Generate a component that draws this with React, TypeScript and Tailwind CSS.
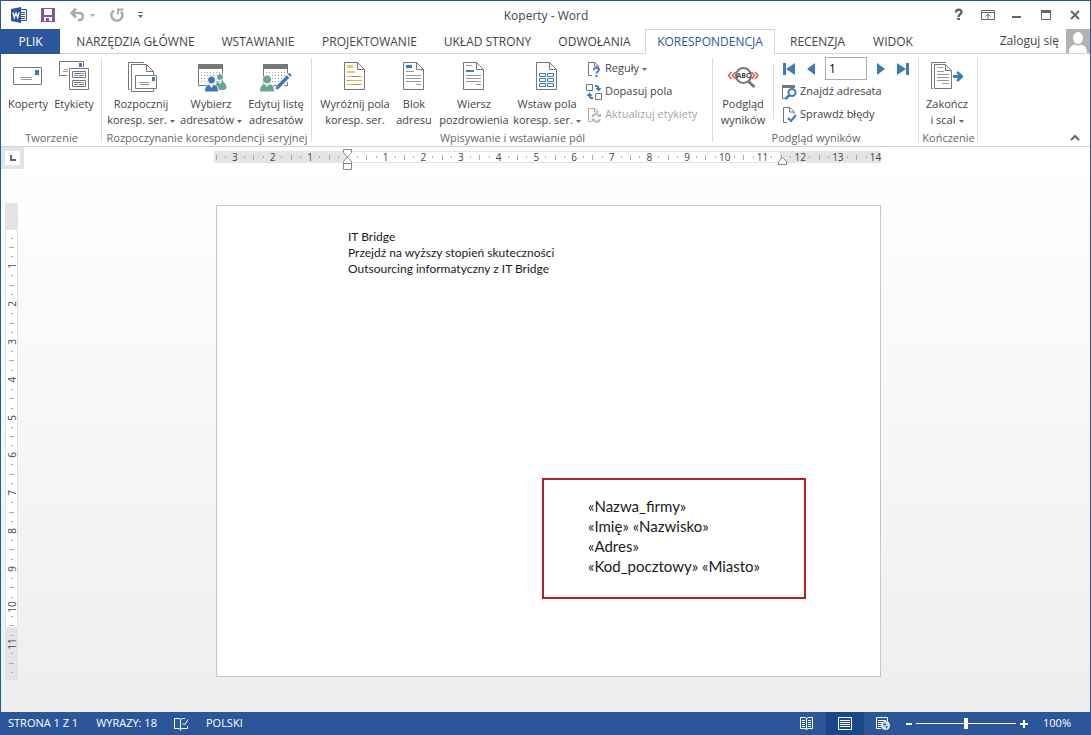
import { useState } from "react";
import type { ReactNode } from "react";
import clsx from "clsx";

const tabs = [
    { label: "NARZĘDZIA GŁÓWNE", width: "w-[145px]" },
    { label: "WSTAWIANIE", width: "w-[100px]" },
    { label: "PROJEKTOWANIE", width: "w-[123px]" },
    { label: "UKŁAD STRONY", width: "w-[113px]" },
    { label: "ODWOŁANIA", width: "w-[101px]" },
    { label: "KORESPONDENCJA", width: "w-[130px]" },
    { label: "RECENZJA", width: "w-[85px]" },
    { label: "WIDOK", width: "w-[66px]" },
];

function Icon({ children }: { children: ReactNode }) {
    return (
        <svg width="32" height="32" viewBox="0 0 32 32" fill="none" className="shrink-0" aria-hidden="true">
            {children}
        </svg>
    );
}

function SmallIcon({ children }: { children: ReactNode }) {
    return (
        <svg width="16" height="16" viewBox="0 0 16 16" fill="none" className="shrink-0" aria-hidden="true">
            {children}
        </svg>
    );
}

function Caret() {
    return (
        <svg width="5" height="3" viewBox="0 0 5 3" className="ml-[3px] inline-block align-middle" aria-hidden="true">
            <path d="M0 0h5L2.5 3z" fill="#666" />
        </svg>
    );
}

function PageOutline() {
    return (
        <>
            <path d="M5.5 2.5h13l7 7v20h-20z" fill="#fff" stroke="#777" />
            <path d="M18.5 2.5v7h7" stroke="#777" />
        </>
    );
}

function Calendar() {
    return (
        <>
            <path d="M3.5 4.5h24v21h-24z" fill="#fff" stroke="#777" />
            <path d="M3 4h25v5H3z" fill="#777" />
            <path
                d="M6 12.5h20M6 15.5h20M6 18.5h20M6 21.5h20"
                stroke="#9a9a9a"
                strokeDasharray="1 2"
            />
        </>
    );
}

function EnvelopeIcon() {
    return (
        <Icon>
            <path d="M1.5 7.5h28v17h-28z" fill="#fff" stroke="#777" />
            <path d="M23 10h4v5h-4z" fill="#3f7ab8" />
            <path d="M8 17.5h12M9 19.5h11" stroke="#999" />
        </Icon>
    );
}

function LabelsIcon() {
    return (
        <Icon>
            <path d="M9 15.5H1.5v-14h24V7" stroke="#777" />
            <path d="M21 3h3v4h-3z" fill="#3f7ab8" />
            <path d="M6 9.5h4M5 11.5h5" stroke="#999" />
            <path d="M11.5 8.5h19v21h-19z" fill="#fff" stroke="#777" />
            <path d="M14.5 11.5h13v6h-13zM14.5 20.5h13v6h-13z" stroke="#777" />
            <path d="M16 13.5h7M16 22.5h7" stroke="#3f7ab8" />
            <path d="M24 13.5h2M16 15.5h4M21 15.5h5M24 22.5h2M16 24.5h4M21 24.5h5" stroke="#888" />
        </Icon>
    );
}

function StartMergeIcon() {
    return (
        <Icon>
            <path d="M19 2.5H3.5v27H5" stroke="#777" />
            <path d="M6.5 4.5h15l7 7v20h-22z" fill="#fff" stroke="#777" />
            <path d="M21.5 4.5v7h7" stroke="#777" />
            <path d="M10.5 15.5h21v13h-21z" fill="#fff" stroke="#777" />
            <path d="M27 17h3v4h-3z" fill="#3f7ab8" />
            <path d="M14 22.5h10M15 24.5h9" stroke="#999" />
        </Icon>
    );
}

function SelectRecipientsIcon() {
    return (
        <Icon>
            <Calendar />
            <circle cx="25" cy="17" r="3.5" fill="#69a597" stroke="#fff" />
            <path d="M20 30c0-6 2-9 5-9s6.5 2 6.5 7l-2 2z" fill="#69a597" />
            <path d="M23 21.5l2 2.5 2-2.5z" fill="#fff" />
            <circle cx="16.5" cy="20" r="4" fill="#3f76b5" stroke="#fff" />
            <path d="M9.5 32c0-5 2-7.500 5-7.500h4c3 0 5 2.500 5 7.500z" fill="#3f76b5" stroke="#fff" />
            <path d="M14.5 25l2 3 2-3z" fill="#fff" />
        </Icon>
    );
}

function EditRecipientsIcon() {
    return (
        <Icon>
            <Calendar />
            <circle cx="7" cy="19.5" r="4.5" fill="#69a597" stroke="#fff" />
            <path d="M-.5 32c0-5 2-8 5-8h5c3 0 5 3 5 8z" fill="#69a597" stroke="#fff" />
            <path d="M5 24.5l2 2.5 2-2.5z" fill="#fff" />
            <path d="M18 27.5L31 14" stroke="#fff" strokeWidth="6" />
            <path d="M18 27l10-10.5" stroke="#3f76b5" strokeWidth="3.5" />
            <path d="M29 15.5l1.5-1.5" stroke="#3f76b5" strokeWidth="3.5" />
            <path d="M15.5 29.5l1-4 3 3z" fill="#3f76b5" />
        </Icon>
    );
}

function HighlightIcon() {
    return (
        <Icon>
            <PageOutline />
            <path d="M8 5h6v3H8zM8 11h8v2H8z" fill="#f0c46c" />
            <path d="M8 16.5h15M8 20.5h15M8 24.5h15" stroke="#e6b04d" />
            <path d="M13 16.5h6M8 20.5h2M16 24.5h4" stroke="#888" />
        </Icon>
    );
}

function AddressBlockIcon() {
    return (
        <Icon>
            <PageOutline />
            <path d="M8 5h6v3H8z" fill="#3f7ab8" />
            <path d="M8 11.5h8M8 15.5h15M8 18.5h15M8 21.5h15M18 24.5h5" stroke="#999" />
        </Icon>
    );
}

function GreetingIcon() {
    return (
        <Icon>
            <PageOutline />
            <path d="M8 10h8v2H8z" fill="#3f7ab8" />
            <path d="M8 5.5h6M8 15.5h15M8 18.5h15M8 21.5h15M18 24.5h5" stroke="#999" />
        </Icon>
    );
}

function InsertFieldIcon() {
    return (
        <Icon>
            <PageOutline />
            <path
                d="M8.5 13.5h6v3h-6zM16.5 13.5h6v3h-6zM8.5 18.5h6v3h-6zM16.5 18.5h6v3h-6zM8.5 23.5h6v3h-6zM16.5 23.5h6v3h-6z"
                stroke="#3f7ab8"
            />
        </Icon>
    );
}

function PreviewIcon() {
    return (
        <Icon>
            <path
                d="M4.5 12l-3 3.5 3 3.5M8.5 12l-3 3.5 3 3.5M24.5 12l3 3.5-3 3.5M28 12l3 3.5-3 3.5"
                stroke="#dd5c3e"
                strokeWidth="1.5"
            />
            <path d="M21.5 21.5l6 5.5" stroke="#777" strokeWidth="3" />
            <circle cx="16.5" cy="15.5" r="7.5" fill="#fff" stroke="#777" strokeWidth="2" />
            <text x="16.5" y="18" textAnchor="middle" fontSize="7" fontWeight="700" fill="#444">
                ABC
            </text>
        </Icon>
    );
}

function FinishIcon() {
    return (
        <Icon>
            <path d="M15 2.5H.5v26H2" stroke="#777" />
            <path d="M3.5 4.5h11l6 6v18h-17z" fill="#fff" stroke="#777" />
            <path d="M14.5 4.5v6h6" stroke="#777" />
            <path d="M6 7.5h6M6 11.5h7M6 14.5h12M6 17.5h12M6 20.5h12M11 23.5h7" stroke="#999" />
            <path d="M22 16.5h8" stroke="#3f7ab8" strokeWidth="3" />
            <path d="M26 12l5 4.5-5 4.5" stroke="#3f7ab8" strokeWidth="2.5" />
        </Icon>
    );
}

function RulesIcon() {
    return (
        <SmallIcon>
            <path d="M6 14.5H2.5v-13H9L12.5 5v1M8.5 1.5V5h4" stroke="#777" />
            <path d="M8 9c0-3 5-3 5-.5 0 2-2.5 1.5-2.5 4" stroke="#3f7ab8" strokeWidth="2" />
            <path d="M9.5 14h2v2h-2z" fill="#3f7ab8" />
        </SmallIcon>
    );
}

function MatchFieldsIcon() {
    return (
        <SmallIcon>
            <path d="M.5.5h6v6h-6zM9.5 9.5h6v6h-6z" stroke="#777" />
            <path d="M9 2c2.500-.5 3.500 1 3.500 3" stroke="#3f7ab8" strokeWidth="2" />
            <path d="M9.500 4h6l-3 3.500z" fill="#3f7ab8" />
            <path d="M7 14c-2.500.5-3.500-1-3.500-3" stroke="#3f7ab8" strokeWidth="2" />
            <path d="M.5 12h6l-3-3.500z" fill="#3f7ab8" />
        </SmallIcon>
    );
}

function RefreshLabelsIcon() {
    return (
        <SmallIcon>
            <path d="M5 14.5H2.5v-13H9L12.5 5M8.5 1.5V5h4" stroke="#aaa" />
            <path d="M6.5 10c1-3.5 5-3.5 7-1M14 12c-1 3.5-5 3.5-7 1" stroke="#b5b5b5" strokeWidth="2" />
            <path d="M15 6v4h-4zM5.5 15.5v-4h4z" fill="#b5b5b5" />
        </SmallIcon>
    );
}

function FindRecipientIcon() {
    return (
        <SmallIcon>
            <path d="M5 14.5H1.5V3.5M13.5 4V2" stroke="#777" />
            <path d="M1 1h13v3H1z" fill="#777" />
            <circle cx="11" cy="8.5" r="3.5" fill="#fff" stroke="#3f7ab8" strokeWidth="2" />
            <path d="M8.5 11l-4 4" stroke="#3f7ab8" strokeWidth="2.5" />
        </SmallIcon>
    );
}

function CheckErrorsIcon() {
    return (
        <SmallIcon>
            <path d="M6 15.5H2.5V.5H9l4 4V7M8.5.5V5H13" stroke="#777" />
            <path d="M7 11l3 3 5-6" stroke="#3f7ab8" strokeWidth="2" />
        </SmallIcon>
    );
}

function BigButton({
    icon,
    lines,
    width,
    menu,
}: {
    icon: ReactNode;
    lines: string[];
    width: string;
    menu?: boolean;
}) {
    return (
        <button className={clsx("flex flex-col items-center gap-1 leading-4 whitespace-nowrap hover:bg-[#d5e1f2]", width)}>
            {icon}
            <span className="text-center">
                {lines.map((line, i) => (
                    <span key={line} className="block">
                        {line}
                        {menu && i === lines.length - 1 && <Caret />}
                    </span>
                ))}
            </span>
        </button>
    );
}

function SmallButton({ icon, label, menu, disabled }: { icon: ReactNode; label: string; menu?: boolean; disabled?: boolean }) {
    return (
        <button disabled={disabled} className="flex h-[23px] items-center gap-[3px] whitespace-nowrap disabled:text-[#a6a6a6]">
            {icon}
            <span>
                {label}
                {menu && <Caret />}
            </span>
        </button>
    );
}

function Group({ label, width, children }: { label: string; width: string; children: ReactNode }) {
    return (
        <section
            aria-label={label}
            className={clsx("relative flex shrink-0 flex-col justify-between", width)}
        >
            <div className="flex grow">{children}</div>
            <h2 className="text-center leading-4 whitespace-nowrap text-[#666]">{label}</h2>
            <div className="absolute top-1 right-0 bottom-1 w-px bg-[#dcdcdc]" />
        </section>
    );
}

function Arrow({ label, children }: { label: string; children: ReactNode }) {
    return (
        <button aria-label={label} className="flex h-[23px] items-center">
            <svg width="14" height="12" viewBox="0 0 14 12" fill="#3f7ab8">
                {children}
            </svg>
        </button>
    );
}

function TitleBar() {
    return (
        <header className="grid h-7 shrink-0 grid-cols-[1fr_auto_1fr] items-center">
            <div className="flex items-center pl-[10px]">
                <svg width="16" height="16" viewBox="0 0 16 16" aria-hidden="true">
                    <path d="M8.5 2.5h7v11h-7z" fill="#fff" stroke="#2b579a" />
                    <path d="M10 5.5h4M10 7.5h4M10 9.5h4M10 11.5h4" stroke="#2b579a" />
                    <path d="M0 2l10-2v16L0 14z" fill="#2b579a" />
                    <path d="M2 5.5l1.3 5L5 6l1.7 4.5L8 5.5" fill="none" stroke="#fff" strokeWidth="1.3" />
                </svg>
                <button aria-label="Zapisz" className="ml-[14px]">
                    <svg width="14" height="14" viewBox="0 0 14 14">
                        <path d="M0 0h14v14H0z" fill="#8454a8" />
                        <path d="M3 1h8v6H3zM3 9h8v4H3z" fill="#fff" />
                        <path d="M5 10h3v3H5z" fill="#8454a8" />
                    </svg>
                </button>
                <button aria-label="Cofnij" className="ml-[15px] flex items-center gap-[6px]">
                    <svg width="14" height="14" viewBox="0 0 14 14" fill="none">
                        <path d="M2 5h7c5.5 0 5 7 .5 7H8" stroke="#aaa" strokeWidth="2.5" />
                        <path d="M6 .5L1.5 5 6 9.500" stroke="#aaa" strokeWidth="2.5" />
                    </svg>
                    <svg width="5" height="3" viewBox="0 0 5 3">
                        <path d="M0 0h5L2.5 3z" fill="#aaa" />
                    </svg>
                </button>
                <button aria-label="Powtórz" className="ml-[15px]">
                    <svg width="14" height="14" viewBox="0 0 14 14" fill="none">
                        <path d="M4 2.5A5.500 5.500 0 1 0 11 3.500" stroke="#aaa" strokeWidth="2.5" />
                        <path d="M8 6.500V1.500h5.500" stroke="#aaa" strokeWidth="2" />
                    </svg>
                </button>
                <button aria-label="Dostosuj pasek" className="ml-[14px]">
                    <svg width="5" height="7" viewBox="0 0 5 7">
                        <path d="M0 0h5v1H0zM0 3h5L2.5 6z" fill="#666" />
                    </svg>
                </button>
            </div>
            <h1 className="pt-[2px] pl-px">Koperty - Word</h1>
            <div className="flex items-center justify-end gap-[15px] pr-2">
                <button aria-label="Pomoc">
                    <svg width="14" height="14" viewBox="0 0 14 14" fill="none">
                        <path d="M4 4.5c0-3.5 5.500-3.5 5.500-.5 0 2.500-3 2-3 5" stroke="#666" strokeWidth="2.5" />
                        <path d="M5 10h3v2H5z" fill="#666" />
                    </svg>
                </button>
                <button aria-label="Opcje wyświetlania Wstążki">
                    <svg width="14" height="14" viewBox="0 0 14 14" fill="none">
                        <path d="M.5 2.5h13v9H.5zM.5 4.5h13M7 6v5M4.500 8.500L7 6l2.500 2.500" stroke="#666" />
                    </svg>
                </button>
                <button aria-label="Minimalizuj">
                    <svg width="14" height="14" viewBox="0 0 14 14">
                        <path d="M2 8h9v2H2z" fill="#666" />
                    </svg>
                </button>
                <button aria-label="Maksymalizuj">
                    <svg width="14" height="14" viewBox="0 0 14 14" fill="none">
                        <path d="M2.500 2.500h9v9h-9z" stroke="#666" />
                        <path d="M2 2h10v3H2z" fill="#666" />
                    </svg>
                </button>
                <button aria-label="Zamknij">
                    <svg width="14" height="14" viewBox="0 0 14 14">
                        <path d="M3 3l8 8M11 3l-8 8" stroke="#666" strokeWidth="2" />
                    </svg>
                </button>
            </div>
        </header>
    );
}

function TabBar() {
    const [active, setActive] = useState("KORESPONDENCJA");

    return (
        <nav className="flex h-[25px] shrink-0 border-b border-[#d4d4d4]">
            <button className="mr-[3px] h-[25px] w-[59px] bg-[#2b579a] text-white">PLIK</button>
            {tabs.map(({ label, width }) => (
                <button
                    key={label}
                    onClick={() => setActive(label)}
                    className={clsx(
                        "h-[25px] shrink-0 whitespace-nowrap",
                        width,
                        active === label && "border-x border-t border-[#d4d4d4] bg-white text-[#2b579a]",
                    )}
                >
                    {label}
                </button>
            ))}
            <button className="ml-auto flex items-center gap-[7px] whitespace-nowrap">
                Zaloguj się
                <svg width="24" height="24" viewBox="0 0 24 24" aria-hidden="true">
                    <path d="M0 0h24v24H0z" fill="#b1b1b1" />
                    <ellipse cx="12" cy="9" rx="5" ry="6" fill="#fff" />
                    <path d="M3 24c0-6 3-8 6-8.5 2 1.5 4 1.5 6 0 3 .5 6 2.500 6 8.500z" fill="#fff" />
                </svg>
            </button>
        </nav>
    );
}

function Ribbon() {
    const [record, setRecord] = useState("1");

    return (
        <div className="flex h-[93px] shrink-0 border-b border-[#d4d4d4] text-[11px]">
            <Group label="Tworzenie" width="w-[101px]">
                <div className="flex pt-[6px] pl-1">
                    <BigButton icon={<EnvelopeIcon />} lines={["Koperty"]} width="w-[46px]" />
                    <BigButton icon={<LabelsIcon />} lines={["Etykiety"]} width="w-[46px]" />
                </div>
            </Group>

            <Group label="Rozpoczynanie korespondencji seryjnej" width="w-[210px]">
                <div className="flex pt-[6px] pl-[2px]">
                    <BigButton icon={<StartMergeIcon />} lines={["Rozpocznij", "koresp. ser."]} width="w-[74px]" menu />
                    <BigButton icon={<SelectRecipientsIcon />} lines={["Wybierz", "adresatów"]} width="w-[66px]" menu />
                    <BigButton icon={<EditRecipientsIcon />} lines={["Edytuj listę", "adresatów"]} width="w-[64px]" />
                </div>
            </Group>

            <Group label="Wpisywanie i wstawianie pól" width="w-[401px]">
                <div className="flex pt-[6px] pl-1">
                    <BigButton icon={<HighlightIcon />} lines={["Wyróżnij pola", "koresp. ser."]} width="w-[78px]" />
                    <BigButton icon={<AddressBlockIcon />} lines={["Blok", "adresu"]} width="w-[40px]" />
                    <BigButton icon={<GreetingIcon />} lines={["Wiersz", "pozdrowienia"]} width="w-[80px]" />
                    <BigButton icon={<InsertFieldIcon />} lines={["Wstaw pola", "koresp. ser."]} width="w-[66px]" menu />
                </div>
                <div className="flex flex-col pt-[3px] pl-[6px]">
                    <SmallButton icon={<RulesIcon />} label="Reguły" menu />
                    <SmallButton icon={<MatchFieldsIcon />} label="Dopasuj pola" />
                    <SmallButton icon={<RefreshLabelsIcon />} label="Aktualizuj etykiety" disabled />
                </div>
            </Group>

            <Group label="Podgląd wyników" width="w-[206px]">
                <div className="flex pt-[6px]">
                    <BigButton icon={<PreviewIcon />} lines={["Podgląd", "wyników"]} width="w-[60px]" />
                </div>
                <div className="mt-[10px] h-[55px] w-px bg-[#dcdcdc]" />
                <div className="flex flex-col pt-[3px] pl-[7px]">
                    <div className="flex items-center gap-2">
                        <Arrow label="Pierwszy rekord">
                            <path d="M2 0h3v12H2zM14 0v12L5 6z" />
                        </Arrow>
                        <Arrow label="Poprzedni rekord">
                            <path d="M12 0v12L4 6z" />
                        </Arrow>
                        <input
                            type="text"
                            aria-label="Rekord"
                            value={record}
                            onChange={(e) => setRecord(e.target.value)}
                            className="h-[23px] w-[42px] border border-[#ababab] bg-white px-[3px] text-[12px] text-black focus:outline-none"
                        />
                        <Arrow label="Następny rekord">
                            <path d="M2 0v12l8-6z" />
                        </Arrow>
                        <Arrow label="Ostatni rekord">
                            <path d="M0 0v12l9-6zM9 0h3v12H9z" />
                        </Arrow>
                    </div>
                    <SmallButton icon={<FindRecipientIcon />} label="Znajdź adresata" />
                    <SmallButton icon={<CheckErrorsIcon />} label="Sprawdź błędy" />
                </div>
            </Group>

            <Group label="Kończenie" width="w-[59px]">
                <div className="flex pt-[6px]">
                    <BigButton icon={<FinishIcon />} lines={["Zakończ", "i scal"]} width="w-[56px]" menu />
                </div>
            </Group>

            <button aria-label="Zwiń Wstążkę" className="mr-[10px] mb-1 ml-auto self-end">
                <svg width="10" height="8" viewBox="0 0 10 8" fill="none">
                    <path d="M1 6l4-4 4 4" stroke="#666" strokeWidth="2" />
                </svg>
            </button>
        </div>
    );
}

// one mark for every quarter of a centimetre
function Marks({ from, count, vertical }: { from: number; count: number; vertical?: boolean }) {
    return (
        <>
            {Array.from({ length: count }, (_, i) => {
                const quarter = from + i;
                const value = Math.abs(quarter / 4);
                return (
                    <div key={i} className={clsx("flex items-center justify-center", vertical ? "h-0 w-full" : "h-full w-0")}>
                        {quarter % 4 === 0 ? (
                            quarter !== 0 && (
                                <span className={clsx("leading-3 text-[#444]", vertical && "-rotate-90")}>{value}</span>
                            )
                        ) : quarter % 2 === 0 ? (
                            <i className={clsx("shrink-0 bg-[#aaa]", vertical ? "h-px w-[5px]" : "h-[5px] w-px")} />
                        ) : (
                            <i className={clsx("shrink-0 bg-[#aaa]", vertical ? "h-px w-[2px]" : "h-[2px] w-px")} />
                        )}
                    </div>
                );
            })}
        </>
    );
}

function HorizontalRuler() {
    return (
        <div className="mx-auto w-[665px] pt-1">
            <div className="relative -ml-[2px] h-3 w-[667px] text-[10px]">
                <div className="absolute inset-0 flex">
                    <div className="w-[133px] bg-[#e4e4e4]" />
                    <div className="grow border-y border-[#e4e4e4] bg-white" />
                    <div className="w-[101px] bg-[#e4e4e4]" />
                </div>
                <div className="relative flex h-full justify-between pr-[5px] pl-[2px]">
                    <Marks from={-14} count={71} />
                </div>
                <svg width="10" height="22" viewBox="0 0 10 22" className="absolute -top-[2px] left-[129px]" aria-hidden="true">
                    <path d="M.5.5h8v3l-4 4.500-4-4.500z" fill="#fff" stroke="#888" />
                    <path d="M4.500 8l4 4.500v8h-8v-8z" fill="#fff" stroke="#888" />
                    <path d="M.5 14.5h8" stroke="#888" />
                </svg>
                <svg width="10" height="8" viewBox="0 0 10 8" className="absolute top-[6px] left-[564px]" aria-hidden="true">
                    <path d="M.5 7.5v-3l4-4 4 4v3z" fill="#fff" stroke="#888" />
                </svg>
            </div>
        </div>
    );
}

function VerticalRuler() {
    return (
        <div className="relative mt-[34px] ml-1 h-[477px] w-[13px] text-[10px]">
            <div className="absolute inset-0 flex flex-col">
                <div className="h-[27px] bg-[#e4e4e4]" />
                <div className="grow border-x border-[#e1e1e1] bg-white" />
                <div className="h-[53px] bg-[#e4e4e4]" />
            </div>
            <div className="relative flex h-full flex-col justify-between pt-[35px] pb-[7px]">
                <Marks from={1} count={47} vertical />
            </div>
        </div>
    );
}

function Workspace() {
    return (
        <main className="grid grow grid-cols-[24px_1fr_18px] grid-rows-[22px_1fr] bg-linear-to-b from-white to-[#eeeeee]">
            <div className="flex h-[22px] w-[23px] items-center justify-center bg-[#e4e4e4]">
                <button aria-label="Tabulator" className="flex h-[14px] w-[15px] items-center justify-center bg-white">
                    <svg width="6" height="6" viewBox="0 0 6 6">
                        <path d="M0 0h2v4h4v2H0z" fill="#666" />
                    </svg>
                </button>
            </div>
            <HorizontalRuler />
            <div />

            <VerticalRuler />
            <article className="mx-auto mt-9 h-[472px] w-[665px] border border-[#c6c6c6] bg-white pt-[23px] font-['Lato','Open_Sans',sans-serif] text-[#1a1a1a]">
                <div className="pl-[131px] text-[12px] leading-4">
                    <p>IT Bridge</p>
                    <p>Przejdź na wyższy stopień skuteczności</p>
                    <p>Outsourcing informatyczny z IT Bridge</p>
                </div>
                <div className="mt-[201px] ml-[325px] w-[264px] border-2 border-[#b52025] pt-4 pb-[21px] pl-11 text-[15px] leading-5">
                    <p>«Nazwa_firmy»</p>
                    <p>«Imię» «Nazwisko»</p>
                    <p>«Adres»</p>
                    <p>«Kod_pocztowy» «Miasto»</p>
                </div>
            </article>
        </main>
    );
}

function StatusBar() {
    const [zoom, setZoom] = useState(50);

    return (
        <footer className="flex h-[23px] shrink-0 items-center bg-[#2b579a] pr-[19px] pl-[7px] text-[11px] whitespace-nowrap text-white">
            <span>STRONA 1 Z 1</span>
            <span className="ml-[18px]">WYRAZY: 18</span>
            <button aria-label="Sprawdzanie" className="ml-[17px]">
                <svg width="15" height="14" viewBox="0 0 15 14" fill="none" stroke="#fff">
                    <path d="M6.5 2.5L5 1.5H.5v10H5l1.500 1 1.500-1h5.500V9M6.5 2.5v11M6.5 2.5L8 1.5h3M8.5 6l2 2 3.500-5.500" />
                </svg>
            </button>
            <button className="ml-[17px]">POLSKI</button>

            <button aria-label="Tryb odczytu" className="ml-auto flex h-full w-[38px] items-center justify-center">
                <svg width="14" height="13" viewBox="0 0 14 13" fill="none" stroke="#fff">
                    <path d="M6.5 1.5L5 .5H.5v11H5l1.500 1 1.500-1h4.500V.5H8zM6.5 1.5v11" />
                    <path d="M2 3.5h3M2 5.5h3M2 7.5h3M2 9.5h3M8 3.5h3M8 5.5h3M8 7.5h3M8 9.5h3" />
                </svg>
            </button>
            <button aria-label="Układ wydruku" className="flex h-full w-[38px] items-center justify-center bg-[#19478a]">
                <svg width="14" height="13" viewBox="0 0 14 13" fill="none" stroke="#fff">
                    <path d="M.5.5h13v12H.5zM2 3.5h10M2 5.5h10M2 7.5h10M2 9.5h10" />
                </svg>
            </button>
            <button aria-label="Układ sieci Web" className="flex h-full w-[38px] items-center justify-center">
                <svg width="14" height="13" viewBox="0 0 14 13" fill="none" stroke="#fff">
                    <path d="M5 11.5H.5V.5h11v4M2 3.5h8M2 5.5h5M2 7.5h3M2 9.5h3" />
                    <circle cx="9.5" cy="8.5" r="4" fill="#c9d5e8" />
                    <path d="M7 7l2-1 1 1.500-1.500 1.500zM10 9l2 .5-2 2.500z" fill="#2b579a" strokeWidth="0" />
                </svg>
            </button>
            <button aria-label="Pomniejsz" className="ml-1 flex h-full items-center">
                <svg width="6" height="2" viewBox="0 0 6 2">
                    <path d="M0 0h6v2H0z" fill="#fff" />
                </svg>
            </button>
            <input
                type="range"
                aria-label="Powiększenie"
                min={0}
                max={100}
                value={zoom}
                onChange={(e) => setZoom(Number(e.target.value))}
                className="mx-1 h-[11px] w-[100px] appearance-none bg-transparent bg-[linear-gradient(#fff,#fff)] bg-[length:100%_1px] bg-center bg-no-repeat [&::-webkit-slider-thumb]:h-[11px] [&::-webkit-slider-thumb]:w-1 [&::-webkit-slider-thumb]:appearance-none [&::-webkit-slider-thumb]:bg-white"
            />
            <button aria-label="Powiększ" className="flex h-full items-center">
                <svg width="8" height="8" viewBox="0 0 8 8">
                    <path d="M3 0h2v3h3v2H5v3H3V5H0V3h3z" fill="#fff" />
                </svg>
            </button>
            <span className="ml-[15px]">{zoom * 2}%</span>
        </footer>
    );
}

export default function App() {
    return (
        <div className="flex min-h-screen flex-col border-x border-t border-[#2b579a] bg-white font-['Open_Sans','Noto_Sans',sans-serif] text-[12px] text-[#444]">
            <TitleBar />
            <TabBar />
            <Ribbon />
            <Workspace />
            <StatusBar />
        </div>
    );
}
